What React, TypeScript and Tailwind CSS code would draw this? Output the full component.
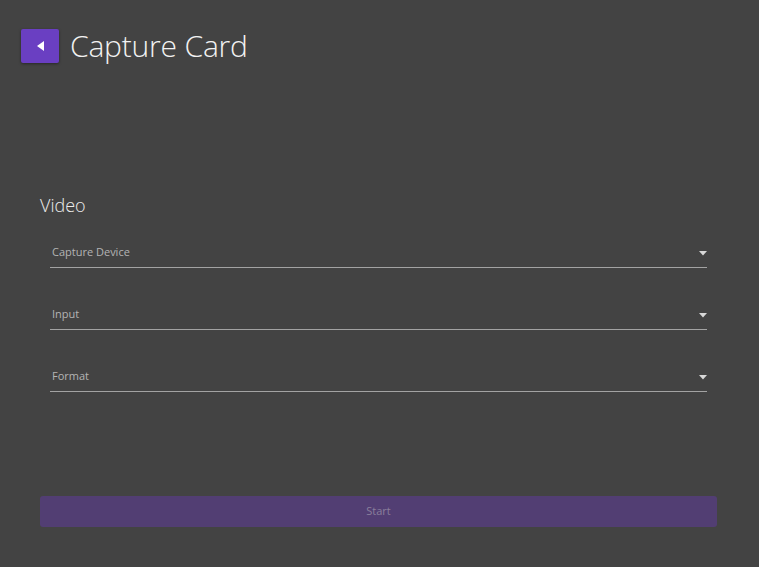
import React from 'react';

const fields = ['Capture Device', 'Input', 'Format'];

const SelectField: React.FC<{ label: string }> = ({ label }) => (
  <div className="flex h-[32px] items-end border-b border-[#a3a3a3] pl-[2px] pb-[8px]">
    <span className="flex-1 text-[11px] leading-[14px] text-[#b4b4b4]">{label}</span>
    <svg width="8" height="5" viewBox="0 0 8 5" className="mb-[3px]">
      <path d="M0 0h8L4 4.5z" fill="#d8d8d8" />
    </svg>
  </div>
);

const App: React.FC = () => {
  return (
    <div className="h-[567px] w-[759px] overflow-hidden bg-[#434343] font-['Open_Sans','Liberation_Sans',sans-serif]">
      {/* Header */}
      <div className="flex items-center pl-[21px] pt-[28px]">
        <button className="flex h-[34px] w-[38px] items-center justify-center rounded-[2px] bg-[#6a3fc2] shadow-[0_1px_3px_rgba(0,0,0,0.4)]">
          <svg width="7" height="10" viewBox="0 0 7 10">
            <path d="M7 0v10L0 5z" fill="#ffffff" />
          </svg>
        </button>
        <h1 className="ml-[11px] text-[30px] font-light leading-[36px] tracking-[-0.2px] text-[#f2f2f2]">Capture Card</h1>
      </div>

      {/* Video section */}
      <div className="px-[40px] pt-[129px]">
        <h2 className="text-[18px] font-light leading-[24px] text-[#ececec]">Video</h2>
        <div className="flex flex-col gap-[30px] pl-[10px] pr-[12px] pt-[19px]">
          {fields.map((f) => (
            <SelectField key={f} label={f} />
          ))}
        </div>

        <button
          disabled
          className="mt-[104px] flex h-[31px] w-[677px] items-center justify-center rounded-[3px] bg-[#523e73] text-[11px] text-[#8a7f9c]"
        >
          Start
        </button>
      </div>
    </div>
  );
};

export default App;
